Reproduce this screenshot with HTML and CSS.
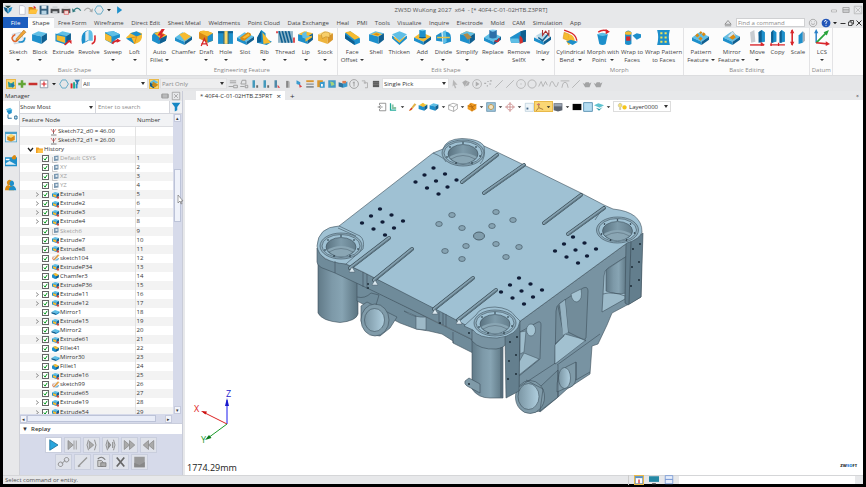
FILE: index.html
```html
<!DOCTYPE html>
<html lang="en">
<head>
<meta charset="utf-8">
<title>ZW3D WuKong 2027</title>
<link rel="stylesheet" href="styles.css">
</head>
<body>
<div class="app">
  <header class="titlebar">
    <div class="quick" data-icons="logo new open save print printer2 undo redo hexa caret play"></div>
    <h1 class="title">ZW3D WuKong 2027&nbsp; x64 &nbsp;- [* 40F4-C-01-02HTB.Z3PRT]</h1>
    <div class="winbtns" data-icons="winmin winmax winclose"></div>
  </header>
  <div class="tabbar">
    <button class="file">File</button>
    <button class="shape">Shape</button>
    <nav class="tabs" id="tabs"></nav>
    <div class="finder">
      <span data-icons="tri"></span>
      <input class="find" type="text" aria-label="Find a command" placeholder="Find a command">
      <span class="tools" data-icons="smile help caret dash restore cross"></span>
    </div>
  </div>
  <div class="ribbon" id="ribbon"></div>
  <div class="toolbar">
    <span class="icons" data-icons="pick:on plus minus boxplus caret hexa filterc"></span>
    <select class="field" aria-label="Filter"><option>All</option></select>
    <span class="icons" data-icons="box3:on"></span>
    <select class="field off" aria-label="Scope"><option>Part Only</option></select>
    <span class="icons mid" data-icons="lines lines2 bar1 bar1 bar2 bar3 bar4 layers pageo globe book clock pages dark"></span>
    <select class="field" aria-label="Pick mode"><option>Single Pick</option></select>
    <span class="icons faded" data-icons="arrowg gear playc dots slash slash circ ring wave wave2 arch slash teapot teapot"></span>
  </div>
  <main class="main">
    <aside class="manager">
      <div class="mhead"><span>Manager</span><span class="icons" data-icons="pin closebox"></span></div>
      <div class="mbody">
        <div class="side" data-icons="treei:sel cubei sheeti useri"></div>
        <div class="panel">
          <div class="search">
            <select class="show" aria-label="Show"><option>Show Most</option></select>
            <input type="text" aria-label="Search features" placeholder="Enter to search">
            <button class="funnel" aria-label="Filter" data-icons="funnel"></button>
          </div>
          <div class="treebox">
            <div class="treecol">
              <div class="cols"><span>Feature Node</span><span>Number</span></div>
              <div class="rows"><table><tbody id="tree"></tbody></table></div>
            </div>
            <div class="vbar"><button aria-label="Scroll up">▴</button><i class="thumb"></i><button aria-label="Scroll down">▾</button></div>
          </div>
          <div class="hbar"><button aria-label="Scroll left">◂</button><i class="thumb"></i><button aria-label="Scroll right">▸</button></div>
          <h2 class="rhead">▼ &nbsp;Replay</h2>
          <div class="replay">
            <div id="r1"></div>
            <div id="r2"></div>
          </div>
        </div>
      </div>
      <svg class="cursor" viewBox="0 0 7 10"><path d="M1 0v8l2-2 1 3 1-.5-1-2.500h2z" fill="#fff" stroke="#666" stroke-width=".6"/></svg>
    </aside>
    <section class="doc">
      <div class="doctabs"><span class="doctab">* 40F4-C-01-02HTB.Z3PRT <button aria-label="Close">×</button></span><button class="add" aria-label="New">+</button><span class="more">»</span></div>
      <div class="view">
        <div class="viewbar">
          <span class="icons" data-icons="exit axes caret pencil boxy cube caret wire caret amber caret zoomb caret compass caret corner"></span>
          <span class="icons hot" data-icons="csys caret"></span>
          <span class="icons" data-icons="monitor caret black sky plane caret"></span>
          <span class="layer"><span data-icons="bulb"></span><select aria-label="Layer"><option>Layer0000</option></select></span>
        </div>
        <svg class="model" id="model" viewBox="185 115 678 360" role="img" aria-label="Machine base casting"></svg>
        <svg class="triad" viewBox="190 388 50 60">
          <g fill="none" stroke-width="1"><path d="M227 424V400" stroke="#1a1aee"/><path d="M227 424L203 412" stroke="#d22"/><path d="M227 424L208 438" stroke="#1a9a2a"/></g>
          <path d="M225 406l2-8 2 8z" fill="#1a1acc"/><path d="M201 411l6 .5-1.500 3z" fill="#c11"/><path d="M205 440l4-5 2.500 3z" fill="#0a7a1a"/>
          <g font-family="Open Sans, sans-serif" font-size="9"><text x="226" y="397" fill="#22c">Z</text><text x="194" y="412" fill="#d22">X</text><text x="201" y="443" fill="#1a9a2a">Y</text></g>
        </svg>
        <span class="scale">1774.29mm</span>
        <span class="brand">ZW<b>SO</b>FT</span>
      </div>
    </section>
  </main>
  <footer class="status"><span>Select command or entity.</span><span class="icons" data-icons="calend:on screen panel"></span><i class="slot"></i></footer>
</div>
<script src="app.js"></script>
</body>
</html>
```
FILE: styles.css
```css
* { box-sizing: border-box; }
html, body { height: 100%; }
body { margin: 0; background: #000; font: 6px/8px "Open Sans", "Noto Sans", sans-serif; color: #333; }
button, input, select, h1, h2 { font: inherit; color: inherit; margin: 0; padding: 0; border: 0; background: none; border-radius: 0; appearance: none; outline: none; }
svg { display: block; overflow: visible; }
.app { height: 100vh; border: 3px solid #000; display: flex; flex-direction: column; background: #e7e8ea; }
.ic { width: 10px; height: 10px; flex: none; }
.ic.caret { width: 8px; }
.icons, [data-icons] { display: flex; align-items: center; gap: 1px; }
.ic.on { background: #fbd774; outline: 1px solid #e9b949; outline-offset: -1px; }

.titlebar { height: 14px; flex: none; display: grid; grid-template-columns: 1fr auto 1fr; align-items: center; }
.quick .ic:first-child { margin-right: 3px; }
.title { font-weight: 400; color: #555; padding-left: 76px; }
.winbtns { justify-content: flex-end; gap: 2px; }
.tabbar { height: 11px; flex: none; display: flex; align-items: stretch; }
.file { background: #1b5dbf; color: #fff; width: 25px; }
.shape { background: #fdfdfd; width: 26px; border-top: 1px solid #d5d6d8; }
.tabs { flex: 530 1 0; display: flex; justify-content: space-between; padding: 0 6px 0 4px; align-items: center; }
.tabs a { color: #444; text-decoration: none; white-space: nowrap; }
.finder { flex: 279 1 0; display: flex; justify-content: flex-end; align-items: center; gap: 3px; color: #444; }
.finder .find { width: 69px; height: 9px; background: #fff; border: 1px solid #cfd0d2; padding-left: 1px; }
::placeholder { color: #8b8b8b; opacity: 1; }
.finder .tools { gap: 0; }
.finder .tools .ic:first-child { margin-right: 3px; }
.finder .tools .ic:nth-child(n+4) { width: 8px; }

.ribbon { height: 48px; flex: none; display: flex; background: #fcfcfc; border-bottom: 1px solid #dcdddf; }
.group { display: flex; flex-direction: column; border-right: 1px solid #e3e3e5; min-width: 0; flex-basis: 0; }
.g1 { flex-grow: 144; } .g2 { flex-grow: 191; } .g3 { flex-grow: 218; } .g4 { flex-grow: 129; } .g5 { flex-grow: 126; } .g6 { flex-grow: 22; } .g7 { flex-grow: 30; border: 0; }
.tiles { display: flex; justify-content: space-between; align-items: flex-start; padding: 1px 3px 0; flex: 1; }
.g1 .tiles { padding-left: 6px; }
.g4 .tiles { padding: 1px 1px 0; }
.tile { display: flex; flex-direction: column; align-items: center; text-align: center; white-space: nowrap; color: #444; }
.tile .big { width: 17px; height: 17px; margin-bottom: 2px; }
.car::after { content: ""; display: inline-block; border: 2px solid transparent; border-top: 2px solid #333; border-bottom: 0; margin: 0 0 1px 2px; }
.car:empty::after { margin-left: 0; }
.gname { text-align: center; color: #888; height: 9px; position: relative; }

.toolbar { height: 15px; flex: none; display: flex; align-items: center; gap: 1px; padding-left: 3px; background: #e5e6e8; }
.field { width: 67px; height: 11px; background: #fff url("data:image/svg+xml,%3Csvg xmlns='http://www.w3.org/2000/svg' width='4' height='3'%3E%3Cpath d='M0 0h4L2 3z' fill='%23333'/%3E%3C/svg%3E") no-repeat right 2px center; border: 1px solid #e0e0e2; padding-left: 1px; }
.field.off { background-color: #eeeeef; color: #888; }
.mid { opacity: .85; }
.faded { opacity: .6; }

.main { flex: 1; min-height: 0; display: flex; }
.manager { width: 180px; flex: none; display: flex; flex-direction: column; position: relative; border-right: 1px solid #c9ccd8; }
.mhead { height: 10px; flex: none; display: flex; justify-content: space-between; align-items: center; padding: 0 1px 0 2px; }
.mbody { flex: 1; min-height: 0; display: flex; }
.side { width: 16px; flex-direction: column; gap: 0; }
.side .ic { width: 16px; height: 24px; padding: 5px 2px; }
.side .ic.sel { background: #fff; }
.panel { flex: 1; min-width: 0; display: flex; flex-direction: column; border-left: 1px solid #cfd1d8; background: #d6daea; }
.search { height: 13px; flex: none; display: flex; gap: 1px; padding-bottom: 1px; background: #d4d6dc; }
.show { width: 75px; background: #fff url("data:image/svg+xml,%3Csvg xmlns='http://www.w3.org/2000/svg' width='4' height='3'%3E%3Cpath d='M0 0h4L2 3z' fill='%23333'/%3E%3C/svg%3E") no-repeat right 2px center; }
.search input { flex: 1; min-width: 0; background: #fff; padding-left: 2px; }
.funnel { width: 12px; background: #f0f1f4; justify-content: center; }
.treebox { flex: 1; min-height: 0; display: flex; }
.treecol { flex: 1; min-width: 0; display: flex; flex-direction: column; background: #fff; }
.cols { height: 13px; flex: none; display: grid; grid-template-columns: 115px 1fr; align-items: center; background: #f2f3f5; border-bottom: 1px solid #dcdde1; }
.cols span { padding-left: 2px; }
.rows { flex: 1; min-height: 0; overflow: hidden; }
.rows table { width: 100%; height: 101%; border-collapse: collapse; table-layout: fixed; }
.rows td { padding: 0; line-height: 7px; }
.rows td:first-child { width: 115px; border-right: 1px solid #e3e3e3; }
.rows td:last-child { padding-left: 1px; }
.rows tr:nth-child(even) { background: #f3f3f3; }
.rows tr.dim label { color: #a0a0a0; }
.node { display: flex; align-items: center; gap: 2px; padding-left: 15px; }
.node .exp { width: 5px; height: 5px; flex: none; }
.node input { width: 7px; height: 7px; flex: none; border: 1px solid #666; background: #fff url("data:image/svg+xml,%3Csvg xmlns='http://www.w3.org/2000/svg' viewBox='0 0 6 6'%3E%3Cpath d='M1 3l1.500 2L5 1' fill='none' stroke='%23079a20' stroke-width='1.200'/%3E%3C/svg%3E"); }
.node .ic { width: 9px; height: 8px; }
.node label { white-space: nowrap; margin-left: -2px; }
.node.var { padding-left: 29px; }
.node.root { padding-left: 8px; }
.vbar { width: 9px; display: flex; flex-direction: column; align-items: stretch; justify-content: space-between; background: #d6daea; padding: 0 1px; }
.vbar button, .hbar button { font-size: 5px; line-height: 7px; height: 8px; width: 7px; background: #f2f4fa; border: 1px solid #c5cadd; }
.vbar .thumb { height: 53px; background: #eff2fa; border: 1px solid #bcc3d8; margin-bottom: 138px; }
.hbar { height: 9px; flex: none; display: flex; align-items: center; padding-right: 10px; background: #d6daea; }
.hbar .thumb { width: 129px; height: 7px; background: #e9edf8; border: 1px solid #bcc3d8; margin-right: auto; }
.rhead { height: 11px; flex: none; background: #fff; border-top: 1px solid #c9cddc; padding: 1px 2px; font-weight: 600; }
.replay { height: 41px; flex: none; padding: 3px 0 0; display: flex; flex-direction: column; gap: 1px; align-items: center; }
.replay div { display: flex; gap: 2px; }
.replay button { width: 17px; height: 16px; background: #dfe2ea; border: 1px solid #c9cedd; display: grid; place-items: center; }
.replay button.live { background: #fff; }
.replay .ic { width: 13px; height: 12px; }
.cursor { position: absolute; left: 174px; top: 104px; width: 7px; height: 10px; }

.doc { flex: 1; min-width: 0; display: flex; flex-direction: column; margin-left: 2px; }
.doctabs { height: 9px; flex: none; display: flex; align-items: center; padding: 0 3px 0 11px; gap: 5px; }
.doctab { background: #fff; width: 89px; height: 9px; padding: 0 4px; display: flex; justify-content: space-between; align-items: center; white-space: nowrap; }
.doctabs button { font-size: 8px; line-height: 8px; }
.more { margin-left: auto; transform: rotate(90deg); }
.view { flex: 1; min-height: 0; background: #fff; position: relative; display: flex; flex-direction: column; }
.viewbar { height: 15px; flex: none; display: flex; align-items: center; justify-content: center; padding-bottom: 2px; }
.viewbar .ic.caret { width: 7px; }
.hot { background: #fbd774; border: 1px solid #e9b949; height: 11px; gap: 0; }
.layer { display: flex; align-items: center; width: 58px; height: 11px; border: 1px solid #ddd; margin-left: 1px; gap: 2px; padding-left: 3px; }
.layer select { flex: 1; min-width: 0; background: url("data:image/svg+xml,%3Csvg xmlns='http://www.w3.org/2000/svg' width='4' height='3'%3E%3Cpath d='M0 0h4L2 3z' fill='%23333'/%3E%3C/svg%3E") no-repeat right 2px center; }
.model { flex: 1; min-height: 0; width: 100%; }
.triad { position: absolute; left: 5px; bottom: 27px; width: 50px; height: 60px; }
.scale { position: absolute; left: 2px; bottom: 1px; font-size: 9px; line-height: 12px; color: #222; }
.brand { position: absolute; right: 6px; bottom: 6px; font-size: 4px; line-height: 6px; font-weight: 800; }
.brand b { color: #1b7fe0; font-weight: 800; }

.status { height: 9px; flex: none; display: flex; align-items: center; gap: 5px; padding: 0 8px 0 2px; border-top: 1px solid #d5d6d8; color: #555; }
.status .icons { margin-left: auto; gap: 5px; padding-left: 5px; border-left: 1px solid #ccc; }
.status .slot { width: 176px; height: 8px; background: #fff; }
```
FILE: app.js
```js
const B = '#1d8fcb', L = '#5fbfe6', D = '#0f5f90', Y = '#f6bb30', O = '#d98a12', R = '#d8262b', G = '#888';
const p = (d, f, s, w) => `<path d="${d}" fill="${f || 'none'}"${s ? ` stroke="${s}" stroke-width="${w || 1}"` : ''}/>`;
const box = (t, l, r) => p('M1 5L7 2L15 4L10 7Z', t) + p('M1 5L10 7V14L1 11Z', l) + p('M10 7L15 4V10L10 14Z', r);
const slab = (t, l, r) => p('M0 8L7 3L16 7L9 12Z', t) + p('M0 8L9 12V15L0 11Z', l) + p('M9 12L16 7V10L9 15Z', r);
const arrow = p('M9 15L14 11', '', R, 1.600) + p('M11.500 10.500H15.500V14Z', R);
const ball = p('M1 6Q3 2 8 3L15 6L14 11L7 14L1 11Z', B) + p('M3 4L8 2L15 6L9 9Z', Y) + p('M9 9L15 6L14 11L8 14Z', D);

// Every drawing uses a 16 x 16 box.
const art = {
  sketch: p('M2 5L10 3L14 12L4 14Z', '#e8eef4', '#b9c6d2', .6) + p('M5 5Q0 8 3 11Q6 13 8 9', '', '#e4642b', 1.400) + p('M8 12Q14 13 14 8', '', B, 1.500) + p('M6 9L13 1L15 3L8 10L5.500 11Z', '#f0a437', '#a56a19', .5),
  block: box(L, B, D),
  extrude: box(L, Y, D) + p('M1 5L10 7V14L1 11Z', '', B, 1.200) + arrow,
  extrudes: box(L, B, D) + p('M3 6.500L9 8V12.500L3 10.500Z', Y) + p('M10 11H15V15H11Z', '#d4483c'),
  revolve: p('M2 14Q0 5 5 2L8 1V11Z', B) + p('M8 1Q12 1 12 6L12 11L8 11Z', L) + p('M5 3L8 1V10L5 12Z', '#e6edf2') + p('M11 14Q15 13 14 6', '', R, 1.500),
  sweep: p('M1 3L9 2L15 5V8Q10 9 8 14L1 10Z', B) + p('M1 3L9 2L15 5L8 7Z', L) + p('M1 4L7 7V13L1 10Z', Y) + p('M8 14Q9 11 14 11', '', R, 1.600) + p('M12 9L16 11L12 13Z', R),
  loft: p('M0 8Q3 6 4 4Q10 1 15 4V8Q14 13 8 14Z', Y) + p('M4 4L10 2L15 5L10 7Z', B) + p('M0 9L5 8L8 14Z', B) + p('M5 8Q9 8 10 7L8 14', '', O, .8),
  autofillet: ball + p('M10 0L6 6H9L7 11L13 5H10L13 0Z', R),
  chamfer: slab(L, B, D) + p('M4 5L9 3L15 7L9 11Z', Y),
  draft: p('M1 3Q5 0 14 4V11L9 13L1 9Z', O) + p('M1 3Q5 0 14 4L9 7Z', Y) + p('M9 7L14 4V11L9 13Z', B) + p('M3 16L6 9L9 16M3 14H9', '', R, 1.200),
  hole: p('M1 2H15V14H1Z', B) + p('M6 2H11V14H6Z', Y) + p('M1 2H15V4H11V14H6V4H1Z', D) + p('M7 2H10V14H7Z', '#ffd968'),
  slot: slab(L, B, D) + p('M3 8L10 3Q14 4 13 6L7 11Q3 11 3 8Z', O) + p('M5 8L11 4L12 6L7 9Z', Y),
  rib: p('M1 13V9L5 1L9 4V9L15 12L10 15Z', B) + p('M6 3L14 13L7 14Z', Y) + p('M5 1V12L1 13V8Z', D),
  thread: p('M1 2H15V13H1Z', '#8fb5c8') + p('M2 2L5 13M5 2L8 13M8 2L11 13M11 2L14 13', '', D, 1.500) + p('M0 4V2M16 13V8', '', R, 1.500),
  lip: box(Y, B, D) + p('M5 4L9 2V6L14 7L10 10L5 8Z', L) + p('M8 9L14 6V8L8 12Z', Y),
  stock: box('#fadc80', '#eeb43c', '#d9962a') + p('M4 5Q8 1 12 4V8Q8 6 5 9Z', '#f7cf6a', '#b98325', .5),
  face: p('M1 4L6 2L15 9V13L10 15L1 9Z', B) + p('M1 3L6 2L15 8L10 10Z', Y) + p('M1 5L10 12V15L1 9Z', D),
  shell: box(L, B, D) + p('M3 5L8 3L13 5L9 7Z', Y) + p('M5 5L8 4L11 5L9 6Z', O),
  thicken: p('M1 6L8 11L15 6V9L8 15L1 9Z', B) + p('M1 5L8 2L15 5L8 11Z', L) + p('M3 7L8 11L13 7V8L8 13L3 9Z', Y),
  add: slab(Y, B, D) + p('M5 1H11V8Q8 10 5 8Z', B) + p('M5 1Q8 0 11 1Q8 3 5 1Z', L) + p('M5 8L11 8', '', D, 1),
  divide: p('M1 6L6 3L7 12L1 11Z', B) + p('M8 2Q15 2 15 8V12L8 14Z', B) + p('M7 3L10 1L11 12L8 14Z', L) + p('M2 8L14 8', '', '#e5c14c', 1.400),
  simplify: box('#e0a12e', B, D) + p('M1 5L7 2L15 4L10 7Z', L) + p('M4 5L8 4L12 8L8 10Z', '#b08b4a'),
  replace: slab(L, B, D) + p('M5 1H12V8Q8 10 5 8Z', '#2b6fa8') + p('M5 1Q8 0 12 1Q8 4 5 1Z', '#83cdf0') + p('M10 11Q14 13 14 9', '', R, 1.400),
  remove: p('M0 8L10 2L15 1V7L9 13L1 13Z', B) + p('M10 2L15 1V12L10 13Z', D) + p('M9 6Q13 8 12 13L9 14Z', '#d3312f') + p('M0 9L8 9L9 13H1Z', L),
  inlay: slab('#dfe8ee', B, D) + p('M2 6L8 3L14 7L8 11Z', '#b9d9e8') + p('M4 8L8 11L14 4', '', D, 1.400) + p('M8 1V6L11 2L14 6V1', '', '#a33', 1),
  bend: p('M2 1L7 3Q13 5 14 11', '', R, 1.300) + p('M2 3L7 5L6 11L1 9Z', Y, O, .5) + p('M7 5Q12 6 12 12L6 15L4 11L6 10Z', Y) + p('M4 12L8 10L15 12L10 15Z', B),
  morph: p('M3 5H13L11 14Q8 16 5 14Z', B) + p('M3 5Q8 2 13 5Q8 8 3 5Z', L) + p('M4 3Q8 0 13 2', '', R, 1.400) + p('M11 0L15 2.500L11 5Z', R),
  wrap: p('M1 3Q4 0 7 3V14Q4 16 1 14Z', B) + p('M1 3Q4 1 7 3V5Q4 6 1 5Z', Y) + p('M2 7H6V11H2Z', R) + p('M8 6L12 4L16 5V8L12 10Z', B),
  wrapp: p('M2 1L14 1Q12 8 14 15H2Q4 8 2 1Z', B) + p('M5 3H7V5H5ZM9 3H11V5H9ZM5 7H7V9H5ZM9 7H11V9H9ZM5 11H7V13H5ZM9 11H11V13H9Z', '#f1e35a'),
  pattern: slab(L, B, D) + p('M3 6L5 4L7 6L5 8ZM9 5L11 3L13 5L11 7ZM6 9L8 7L10 9L8 11ZM7 3L8 2L10 3L8 5Z', O),
  mirror: slab(L, B, D) + p('M4 7L9 2L12 6L8 9Z', '#cfe6f0', '#7fa5b5', .6) + p('M6 8L10 5L12 8L9 10Z', O),
  move: p('M1 3L5 1L6 12L2 13Z', '#c8ccd0') + p('M9 3L12 1L15 3V12L10 13Z', B) + p('M9 3L12 1V12L9 13Z', D) + p('M1 15H14', '', R, 1.300) + p('M11 12L15 15L11 16Z', R),
  copy: p('M2 3L4 1L7 3V12L2 13Z', B) + p('M10 3L12 1L15 3V12L10 13Z', B) + p('M2 3L4 1V13H2ZM10 3L12 1V13H10Z', D) + p('M1 15H15M2 13V16M9 13V16', '', R, 1.200),
  scale: p('M3 1V15', '', R, 1.500) + p('M1 4L3 0L5 4ZM1 12L3 16L5 12Z', R) + p('M9 6L13 2V13L9 14Z', B) + p('M13 2L15 4V11L13 13Z', '#a8b0b8'),
  lcs: p('M3 13V2', '', '#2a80c8', 1.400) + p('M3 13L13 3', '', '#27a33a', 1.600) + p('M3 13L14 14', '', R, 1.500) + p('M1 4L3 0L5 4Z', '#2a80c8') + p('M10 3L15 1L13 6Z', '#27a33a') + p('M12 11.500L16 14L12 16Z', R),
  logo: p('M1 3L7 5L8 14L3 9Z', D) + p('M15 3L9 5L8 14L13 9Z', B) + p('M3 1H13L8 5Z', '#244'),
  new: p('M4 1H10L13 4V15H4Z', '#fff', '#aab', 1), open: p('M1 3H7L8 5H13V14H1Z', O) + p('M3 7H16L13 14H1Z', '#ffc23c') + p('M9 1L13 4L9 6Z', R),
  save: p('M1 1H15V15H1Z', '#35607e') + p('M4 1H12V6H4Z', '#dfe8ee') + p('M4 9H12V15H4Z', '#b7d4e4'),
  print: p('M1 6H15V13H1Z', '#4a4d50') + p('M4 2H12V6H4ZM4 10H12V14H4Z', '#cfd3d6'), printer2: p('M1 6H15V13H1Z', '#555') + p('M4 2H12V6H4Z', '#ddd') + p('M5 9H12V15H5Z', '#f3dcd8', R, .8),
  undo: p('M3 9Q8 1 14 9', '', '#357d83', 2) + p('M0 5L6 10L1 12Z', '#357d83'), redo: p('M2 9Q8 1 13 9', '', '#aaa', 1.800) + p('M16 5L10 10L15 12Z', '#aaa'),
  hexa: p('M5 1.500H11L15 8L11 14.500H5L1 8Z', '', '#4c9fc0', 1.300), caret: p('M4 6H12L8 10.500Z', '#222'), play: p('M5 2L13 8L5 14Z', B),
  winmin: p('M4 8H12V11H4Z', '#fff', '#999', 1), winmax: p('M3 4H13V12H3ZM3 7H13M3 9.500H13', '', '#888', 1), winclose: p('M2 2H14V14H2ZM4 4L12 12M12 4L4 12', '', '#aaa', 1),
  tri: p('M3 10L8 4L13 10ZM3 12.500H13', '', '#777', 1.200), smile: p('M8 2A6 6 0 1 0 8.100 2M5 9Q8 12 11 9M5 6H6M10 6H11', '', '#999', 1.200), help: p('M8 1A7 7 0 1 0 8.100 1', '#2356b8') + p('M5.500 6Q6 3.500 8 4Q11 5 8 8V9.500M8 11V12.500', '', '#fff', 1.500),
  dash: p('M3 9H13', '', '#333', 2), restore: p('M3 6H10V13H3ZM6 6V3H13V10H10', '', '#333', 1.700), cross: p('M3 3L13 13M13 3L3 13', '', '#333', 2),
  pick: p('M3 4L8 7L13 4V13H4Z', '#2b9a96') + p('M8 7L15 10L11 11L10 15Z', '#1f6fb0'), plus: p('M8 2V14M2 8H14', '', '#63a537', 4), minus: p('M1 8H15', '', '#c8312e', 4),
  boxplus: p('M2 2H14V14H2Z', '#fff', '#789', 1.200) + p('M8 4V12M4 8H12', '', R, 1.800), filterc: p('M1 7H4V15H1Z', R) + p('M5 5H8V15H5Z', '#2a8') + p('M9 8H12V15H9Z', B) + p('M7 1H16L13 5V9L10 7V5Z', '#2678b0'),
  box3: p('M1 5L8 1L15 5L8 9Z', L) + p('M1 5L8 9V15L1 11Z', D) + p('M6 4L15 9L9 14L5 11Z', '#c98b18'),
  lines: p('M3 3H13M3 6H13M1 12H8M9 10H15V14H9Z', '', G, 1.300), lines2: p('M5 2L11 2V8H3ZM2 12H9M10 10H14V14H10Z', '', G, 1.300),
  bar1: p('M4 2H8V14H4Z', '#2a8db5') + p('M10 10H13V14H10Z', '#555'), bar2: p('M4 2H8V14H4Z', '#36799c') + p('M9 9L13 14H9Z', R), bar3: p('M5 3H9V14H5Z', '#777') + p('M10 4V14', '', '#aaa', 1.500), bar4: p('M4 2L10 5V10L4 8Z', B) + p('M8 8L13 12L9 14Z', R),
  layers: p('M2 2H14V5H2Z', O) + p('M2 7H14V9H2ZM2 11H14V14H2Z', '#7a8288'), pageo: p('M2 2H11V13H2Z', O) + p('M6 5L14 4V14H6Z', B) + p('M8 8H11V12H8Z', '#fff'), globe: p('M2 2H14V14H2Z', '#2a8fc0') + p('M5 4L10 5L12 9L7 11Z', '#9bd16a'), book: p('M1 5L8 7V14L1 12Z', D) + p('M8 7L15 4V12L8 14Z', B) + p('M7 3H13V7H7Z', '#e26a35'),
  clock: p('M8 1A7 7 0 1 0 8.100 1M8 4V12M6 6H9', '', G, 1.300), pages: p('M3 3H8V8M6 6H12V14H8', '', '#999', 1.200), dark: p('M3 3H13V13H3Z', '#444') + p('M3 6H13M3 9H13', '', '#888', .7),
  arrowg: p('M5 1L12 9H8L10 14L8 15L6 10L4 12Z', '#999'), gear: p('M2 5L7 2L14 5L12 10L6 12Z', G) + p('M5 14L11 4', '', '#ccc', 1), playc: p('M8 1A7 7 0 1 0 8.100 1', '', G, 1.300) + p('M6 4L12 8L6 12Z', G), dots: p('M2 7H5M7 4H9M10 8H13M6 11H8M11 3H14', '', G, 1.800), slash: p('M2 14L14 2', '', G, 1.300), circ: p('M8 1A7 7 0 1 0 8.100 1M7 8H9', '', G, 1.200), ring: p('M8 1.500A6.500 6.500 0 1 0 8.100 1.500', '', G, 1.300), wave: p('M1 12L5 4L8 12L12 4L15 10', '', G, 1.300), wave2: p('M1 12Q4 -2 8 8T15 5', '', G, 1.300), arch: p('M1 3H15M3 14Q4 5 8 5T13 14', '', G, 1.300), teapot: p('M1 6L4 8L6 5H11L12 7L15 5L12 13H5Z', '#777'),
  pin: p('M3 5H13V11H3ZM3 8H13', '', G, 1.500), closebox: p('M2 2H14V14H2ZM5 5L11 11M11 5L5 11', '', '#999', 1.200),
  treei: p('M1 3L7 1L10 4L5 7Z', L) + p('M2 5L9 4V8L5 10Z', B) + p('M4 10V15H9M13 12H16V16H13Z', '', D, 1.200), cubei: p('M0 1H16V15H0Z', '#4aa0c8') + p('M1 4H15V14H1Z', '#e3eff5') + p('M3 7L8 4L13 6L8 9Z', '#ffd866') + p('M3 7L8 9V14L3 12ZM8 9L13 6V12L8 14Z', O), sheeti: p('M0 3H16V15H0Z', B) + p('M1 11L6 8L15 13H1Z', '#dfeef5') + p('M9 3A3 3 0 1 0 12 0Z', O) + p('M1 5H6V7H1Z', '#fff'), useri: p('M6 1A3.500 4 0 1 0 6.100 1M0 15Q0 8 6 8T12 15Z', O) + p('M9 2A3 4 0 1 0 9.100 2M5 15Q6 9 10 9T15 15Z', B),
  funnel: p('M1 1H15L10 8V13L6 15V8Z', '#1687c4'),
  exit: p('M4 5V2H14V14H4V11M1 8H9M6 5L3 8L6 11', '', '#777', 1.200), axes: p('M4 2V13H13', '', '#2a9', 2) + p('M6 4H9V11H6ZM9 8H13V11H9Z', '#8ac4a6'), pencil: p('M3 14L12 2L15 4L6 14Z', '#e2b24b') + p('M3 14L7 9L9 11Z', R), boxy: box('#dfe87a', B, D) + p('M3 5L8 1L12 5L8 8Z', Y), cube: box(L, B, D), wire: p('M1 5L8 2L15 4V11L9 15L1 12ZM1 5L9 8V15M9 8L15 4', '', '#888', 1), amber: p('M1 6L6 1L15 4V11L8 15L1 11Z', '#ef9a20') + p('M1 6L8 8L15 4M8 8V15M5 3L12 13', '', '#a45a08', 1), zoomb: p('M1 1H15V15H1Z', '#9cc4da', '#4f7f9c', 1) + p('M8 4A4 4 0 1 0 8.100 4', '#f5e3bd', '#b98731', 1.200), compass: p('M8 3A5 5 0 1 0 8.100 3M8 0V16M0 8H16', '', '#b66', 1), corner: p('M2 2H15V15H2Z', '#eef5f9', '#9db9c8', .8) + p('M4 9H7V12H4Z', '#468'), csys: p('M6 2V9L13 12M6 9L2 14', '', '#a4763a', 1.500) + p('M3 3H8V5H3Z', '#c77'),
  monitor: p('M1 2H15V13L8 15L1 13Z', '#5c6470') + p('M2 3H14V7H2Z', '#9aa4b2'), black: p('M1 3H15V13H1Z', '#050505'), sky: p('M1 1H15V15H1Z', '#b5ddf2', '#5d93b3', 1.500), plane: p('M0 5L7 2L16 5L9 9Z', '#5fc3d0') + p('M3 9L9 11L14 8L8 14Z', '#2898a8'), bulb: p('M5 2A3 3.500 0 1 0 5.100 2M4 10H6V12H4Z', '#f4e078', '#999', .6) + p('M12 5A3.500 3.500 0 1 0 12.100 5', '#f5c518'),
  calend: p('M2 2H14V14H2Z', '#fff', '#47a', 1.200) + p('M2 2H14V5H2Z', '#5b92c4') + p('M8 7V13', '', R, 2), screen: p('M0 2H16V11H0Z', '#2589a5') + p('M5 13H11V15H5Z', '#555'), panel: p('M2 1H14V14H2Z', '#e6eefb', '#6a8fd0', 1.200) + p('M2 7H14', '', '#6a8fd0', 1.500),
  hist: p('M1 3H6L8 5H15V14H1Z', '#ee9c20') + p('M4 7H15V14H4Z', '#ffc249'), dim: p('M3 14H14M8 2V12', '', '#555', 1.500) + p('M3 2L8 9L13 2', '', R, 1.200), plane2: p('M2 4V15H12', '', '#999', 1) + p('M5 2L14 1V11L5 12Z', '#7997b0') + p('M8 4H12V8H8Z', '#dce5ed'), fillet: ball, mir: p('M0 8L7 4L16 7L9 11Z', L) + p('M0 8L9 11V14L0 11Z', D) + p('M9 11L16 7V10L9 14Z', B),
  step: p('M2 2L9 8L2 14ZM10 2V14M13 2V14', '#aaa', '#888', 1), par: p('M4 1Q0 8 4 15M12 1Q16 8 12 15', '', '#888', 1.200) + p('M5 3L11 8L5 13Z', '#aaa', '#888', 1), par2: p('M4 1Q0 8 4 15M12 1Q16 8 12 15', '', '#888', 1.200) + p('M5 4L8 8L5 12ZM11 4V12', '#aaa', '#888', 1.500), ff: p('M1 2L8 8L1 14ZM8 2L15 8L8 14Z', '#aaa', '#888', 1), rw: p('M15 2L8 8L15 14ZM8 2L1 8L8 14Z', '#aaa', '#888', 1), go: p('M3 1L14 8L3 15Z', '#29a5dc', '#176a94', 1), link: p('M4 8A3 3 0 1 0 4.100 8M12 2A3 3 0 1 0 12.100 2M6 10L10 6', '', '#888', 1.300), line: p('M2 14L14 2M2 14L5 13', '', '#999', 1.800), rot: p('M3 6H8L10 8V14H3Z', '#ccc', '#777', 1) + p('M7 9H14V14H7Z', '#aaa', '#777', 1) + p('M3 4Q8 -1 13 5', '', '#777', 1.500), del: p('M3 2L13 14M13 2L3 14', '', '#666', 2.300), sq: p('M1 1H15V15H1Z', '#999') + p('M1 9L8 12L15 8V15H1Z', '#888')
};
const svg = (n, c = 'ic') => `<svg class="${c} ${n === 'caret' ? 'caret' : ''}" viewBox="0 0 16 16" aria-hidden="true">${art[n]}</svg>`;
document.querySelectorAll('[data-icons]').forEach(e => {
  e.innerHTML = e.dataset.icons.split(' ').map(s => { const [n, c] = s.split(':'); return svg(n, 'ic ' + (c || '')); }).join('');
});
document.getElementById('tabs').innerHTML = 'Free Form,Wireframe,Direct Edit,Sheet Metal,Weldments,Point Cloud,Data Exchange,Heal,PMI,Tools,Visualize,Inquire,Electrode,Mold,CAM,Simulation,App'.split(',').map(t => `<a href="#">${t}</a>`).join('');

// Label lines are split by "|"; "^" marks a drop-down arrow.
const groups = [
  ['Basic Shape', 'sketch:Sketch|^,block:Block|^,extrude:Extrude,revolve:Revolve,sweep:Sweep|^,loft:Loft|^'],
  ['Engineering Feature', 'autofillet:Auto|Fillet^,chamfer:Chamfer,draft:Draft|^,hole:Hole|^,slot:Slot,rib:Rib|^,thread:Thread|^,lip:Lip|^,stock:Stock|^'],
  ['Edit Shape', 'face:Face|Offset^,shell:Shell,thicken:Thicken,add:Add|^,divide:Divide|^,simplify:Simplify|^,replace:Replace,remove:Remove|SelfX,inlay:Inlay|^'],
  ['Morph', 'bend:Cylindrical|Bend ^,morph:Morph with|Point ^,wrap:Wrap to|Faces,wrapp:Wrap Pattern|to Faces'],
  ['Basic Editing', 'pattern:Pattern|Feature^,mirror:Mirror|Feature^,move:Move|^,copy:Copy,scale:Scale'],
  ['Datum', 'lcs:LCS|^'], ['', '']
];
document.getElementById('ribbon').innerHTML = groups.map(([name, items], i) => `<div class="group g${i + 1}"><div class="tiles">${items ? items.split(',').map(t => {
  const [ic, lab] = t.split(':');
  return `<button class="tile">${svg(ic, 'big')}${lab.split('|').map(x => `<span class="${x.includes('^') ? 'car' : ''}">${x.replace('^', '')}</span>`).join('')}</button>`;
}).join('') : ''}</div><div class="gname">${name}</div></div>`).join('');

const rows = 'Default CSYS-,XY-,XZ-,YZ-,Extrude1>,Extrude2>,Extrude3>,Extrude4>,Sketch6-,Extrude7,Extrude8,sketch104,ExtrudeP34,Chamfer3,ExtrudeP36,Extrude11>,Extrude12>,Mirror1,Extrude15>,Mirror2,Extrude61>,Fillet41,Mirror30,Fillet1,Extrude16>,sketch99,Extrude65,Extrude19>,Extrude54>'.split(',');
const exp = on => `<svg class="exp" viewBox="0 0 5 5">${on ? p('M1 .5L3.500 2.500L1 4.500', '', '#777', .8) : ''}</svg>`;
const pick = (t, dim) => dim ? 'plane2' : t[0] === 'E' ? 'extrudes' : t[0] === 's' ? 'sketch' : t[0] === 'M' ? 'mir' : 'fillet';
document.getElementById('tree').innerHTML =
  ['Sketch72_d0 = 46.00', 'Sketch72_d1 = 26.00'].map(t => `<tr><td><div class="node var">${svg('dim')}<label>${t}</label></div></td><td></td></tr>`).join('') +
  `<tr><td><div class="node root"><svg class="exp" viewBox="0 0 5 5">${p('M0 1L2.500 4L5 1', '', '#222', 1.300)}</svg>${svg('hist')}<label>History</label></div></td><td></td></tr>` +
  rows.map((r, i) => { const dim = r.endsWith('-'), t = r.replace(/[->]$/, ''); return `<tr class="${dim ? 'dim' : ''}"><td><div class="node">${exp(r.endsWith('>'))}<input type="checkbox" id="f${i}" checked>${svg(pick(t, dim))}<label for="f${i}">${t}</label></div></td><td>${i + 1}</td></tr>`; }).join('');
document.getElementById('r1').innerHTML = 'go step par par2 ff rw'.split(' ').map((n, i) => `<button aria-label="${n}" class="${i ? '' : 'live'}">${svg(n)}</button>`).join('');
document.getElementById('r2').innerHTML = 'link line rot del sq'.split(' ').map(n => `<button aria-label="${n}">${svg(n)}</button>`).join('');

// Casting: faces are painted from back to front.
const T = '#9fc1d3', F = '#6f8b9a', S = '#7893a2', K = '#3c4f5a', C = 'url(#cyl)';
const f = (d, c, w = .6) => p(d, c, K, w);
const el = (x, y, a, b, c, w = .6) => `<ellipse cx="${x}" cy="${y}" rx="${a}" ry="${b}" fill="${c}" stroke="${K}" stroke-width="${w}"/>`;
const boss = (x, y) => el(x, y, 21, 13, '#8eacbc') + el(x, y, 19, 11.500, T) + el(x, y + 1, 15, 9.500, 'url(#bore)') +
  `<path d="M${x - 14} ${y + 4}Q${x} ${y - 4} ${x + 14} ${y + 4}Q${x} ${y + 17} ${x - 14} ${y + 4}Z" fill="#8aa6b4"/>` + p(`M${x - 12} ${y + 6}Q${x} ${y - 1} ${x + 12} ${y + 6}`, '', K, .4) +
  [[-16, 4], [-13, -6], [0, -10], [13, -6], [17, 3], [9, 10], [-7, 10]].map(([a, b]) => `<circle cx="${x + a}" cy="${y + b}" r=".8" fill="#14222c"/>`).join('');
const slot = (x1, y1, x2, y2) => `<g stroke-linecap="round">${p(`M${x1} ${y1}L${x2} ${y2}`, '', '#34464f', 3.800)}${p(`M${x1} ${y1}L${x2} ${y2}`, '', '#84a0af', 2.600)}${p(`M${x1 + 1} ${y1 + .5}L${x2 + 1} ${y2 + .5}`, '', '#5a727f', 1.100)}</g>`;
const grid = (x, y) => [[0, 0], [-9, 7], [-18, 14], [11.500, 6], [2.500, 13], [-6.500, 20], [23, 12], [14, 19], [5, 26]].map(([a, b]) => `<ellipse cx="${x + a}" cy="${y + b}" rx="2.200" ry="1.700" fill="#101c36"/>`).join('');
const bolts = a => a.map(([x, y]) => `<circle cx="${x}" cy="${y}" r=".9" fill="#14222c"/>`).join('');
document.getElementById('model').innerHTML = `<defs>
<linearGradient id="cyl"><stop offset="0" stop-color="#617a88"/><stop offset=".35" stop-color="#7d99a8"/><stop offset=".6" stop-color="#87a4b3"/><stop offset="1" stop-color="#5b7481"/></linearGradient>
<linearGradient id="bore"><stop offset="0" stop-color="#5a7381"/><stop offset=".5" stop-color="#7e9baa"/><stop offset="1" stop-color="#657f8d"/></linearGradient>
<linearGradient id="tube"><stop offset="0" stop-color="#7a95a3"/><stop offset="1" stop-color="#b0cfdf"/></linearGradient></defs>` +
  f('M318 262V313Q322 321 340 322.500Q356 321 358 314V270Z', C) +
  f('M357 280L367 287L440 324L473 340V353L453 343V341L442 334L429 331L416 329L400 323L357 301Z', F) +
  p('M404 311Q414 318 426 317V330L416 329V316Z', '#9db9c7', K, .5) +
  f('M361 306L367 302L397 317L390 328L380 336Q366 336 361 321Z', S) + el(375, 320, 14, 16, '#809ba9') + el(374.500, 320, 10, 11.500, 'url(#tube)') +
  p('M357 297Q365 299 371 293L379 295L376 305M453 332V343', '', K, .6) +
  f('M519 322L627 243L642 235L641 297L627 305L612 313L607 325L598 344L592 346L590 374L567 389L557 398L540 412L519 388Z', S) +
  f('M519 387Q530 380 541 386L558 370V397L540 411L530 413Z', '#728d9b') +
  el(530, 397, 14.500, 16.500, '#7f9aa8') + el(528.500, 396.500, 10.500, 13, 'url(#tube)') + p('M526 380L543 389L540 411', '', K, .6) +
  f('M557 392Q556 372 566 367L576 362V378Q575 388 566 388Z', '#7f9aa8') + el(564.500, 378, 6, 10.500, 'url(#tube)') +
  p('M576 362V380L590 372M558 365V397M557 365L600 334M519 387L557 362', '', K, .6) +
  f('M520 332L538 322Q541 321 541 325L540 359L519 376Z', '#7791a0') + p('M520 332L526 331L524 352L520 354ZM519 362L524 353L539 359L519 375Z', '#9ebccb', K, .5) + el(531, 330, 4.500, 6, '#a4c3d2', .5) +
  f('M556 311Q556 306 560 303L583 288Q588 286 588 291L586 338L555 364Z', '#728c9a') + p('M555 345L565 334L586 340L555 364Z', '#a2c1d0', K, .5) + p('M559 305L565 334M565 299L568 332L586 341M558 306L564 336L555 344', '', K, .6) + p('M560 304L565 300L568 332L563 335Z', '#96b3c2') + f('M571 294L581 289Q583 300 577 302Q572 302 571 294Z', '#a4c3d2', .5) +
  f('M604 276Q604 271 608 268L627 256L625 299L602 312Z', '#9dbbca') + f('M606 270L627 256V293Q615 295 606 291Z', C, .5) + p('M603 294Q613 291 625 296', '', K, .6) +
  f('M626 243L631 241L643 233L641 297L628 305L625 303Z', '#637e8d') + p('M631 242L629 304', '', K, .7) + bolts([[633, 249], [640, 244], [632, 267], [639, 262], [631, 286], [639, 280]]) +
  f('M317 248V262Q318 267 325 269L335 273L367 288L443 325L473 340V326L443 312L363 272L346 264L325 259Z', F) +
  f('M317 246Q318 227 339 226L433 153L443 149Q446 139 462 138.500Q480 139 484 146L497 152L524 165L581 193L604 205L613 209Q642 212 642 232Q640 239 627 243L519 322L473 329L443 313L363 272L346 264Q319 262 317 246Z', T) +
  p('M339 226L360 236Q365 240 363 249L346 264M433 153Q445 158 446 162M484 146Q486 158 480 164M604 206L595 220M338 228L356 236', '', K, .6) +
  f('M472 340V389Q478 398 490 398H503V345Z', C) + f('M472 330V341Q480 350 496 349Q507 348 508 338V325Z', '#7893a2') +
  f('M505 337L520 321L519 391L506 398Z', '#647f8e') + p('M501 347V397', '', K, .6) + bolts([[510, 342], [517, 337], [509, 361], [516, 355], [508, 379], [516, 374], [469, 333], [440, 323], [368, 284], [368, 288]]) +
  f('M465 381L469 378L480 384V393L467 386Q464 384 465 381Z', '#7f9aa8') + bolts([[469, 384]]) +
  boss(463, 153) + boss(341, 246) + boss(617.500, 230) +
  f('M464 326L476 315Q480 307 495 307Q510 308 515 316L520 321Q518 336 497 338Q478 338 473 330Z', T, .6) + boss(495, 323) +
  slot(462, 182, 497, 155) + slot(484, 193, 524, 165) + slot(544, 223, 581, 195) + slot(568, 234, 604, 208) + slot(389, 238, 350, 268) + slot(412, 249, 374, 280) + slot(473, 278, 434, 309) + slot(496, 290, 458, 320) +
  p('M349 272H355L352 267ZM372 285H378L375 280ZM432 314H438L435 309ZM456 324H462L459 319Z', '#dbe9f0', K, .4) + p('M335 261V273M363 272V287M367 274V289M439 312V324M443 313V325M446 314V327', '', K, .6) +
  [[433.500, 168], [380, 209], [573, 237], [519, 278]].map(a => grid(...a)).join('') +
  [[452, 215], [439, 224], [462, 228], [466, 246], [445, 251], [462, 259], [496, 212], [513, 220], [492, 226], [496, 244], [519, 247], [506, 257]].map(([x, y]) => el(x, y, 3.300, 2.500, '#86a3b2', .6)).join('') + el(479, 236, 5.500, 4, '#809dac', .8);
```
